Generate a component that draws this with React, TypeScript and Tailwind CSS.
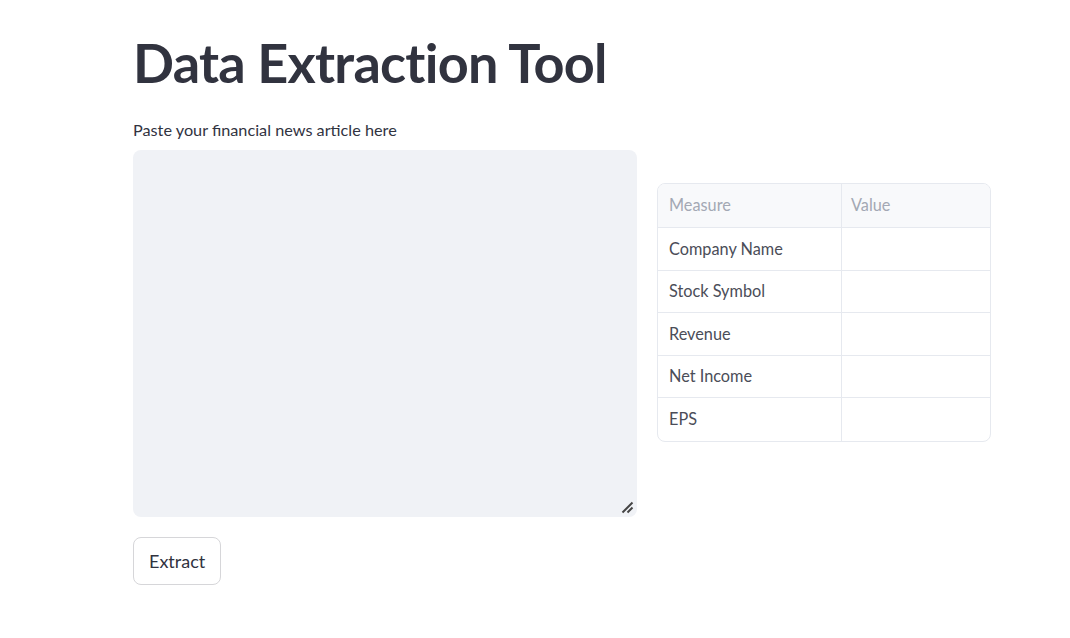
export default function App() {
  const rows = ["Company Name", "Stock Symbol", "Revenue", "Net Income", "EPS"];
  return (
    <div className="min-h-[638px] w-[1070px] bg-white text-[#31333f]" style={{ fontFamily: "Lato, 'Noto Sans', sans-serif" }}>
      <div className="pl-[133px] pr-[70px] pt-[33px]">
        <h1 className="text-[54px] font-bold leading-[60px] tracking-[-0.75px] text-[#31333f]">Data Extraction Tool</h1>
        <div className="mt-[27px] flex gap-[20px]">
          <div className="flex w-[504px] shrink-0 flex-col">
            <label className="text-[16.25px] leading-[20px]">Paste your financial news article here</label>
            <div className="relative mt-[10px] h-[367px] rounded-[8px] bg-[#f0f2f6]">
              <svg className="absolute bottom-[3px] right-[3px]" width="13" height="13" viewBox="0 0 13 13">
                <line x1="11.5" y1="1.5" x2="1.5" y2="11.5" stroke="#444" strokeWidth="2" />
                <line x1="11.5" y1="6.5" x2="6.5" y2="11.5" stroke="#444" strokeWidth="2" />
              </svg>
            </div>
            <div className="mt-[20px]">
              <button className="h-[48px] rounded-[8px] border border-[#d6d6d9] bg-white px-[15px] text-[18px] text-[#31333f]">Extract</button>
            </div>
          </div>
          <div className="shrink-0 pt-[63px]">
            <div className="w-[334px] overflow-hidden rounded-[8px] border border-[#e6e9ef]">
              <div className="flex h-[44px] border-b border-[#e6e9ef] bg-[#f8f9fb] text-[16.3px] text-[#a3a8b4]">
                <div className="flex w-[184px] items-center border-r border-[#e6e9ef] px-[11px]">Measure</div>
                <div className="flex flex-1 items-center px-[9px]">Value</div>
              </div>
              {rows.map((r, i) => (
                <div key={r} className={`flex h-[42.6px] text-[16.3px] text-[#4b4d58] ${i < rows.length - 1 ? "border-b border-[#e6e9ef]" : ""}`}>
                  <div className="flex w-[184px] items-center border-r border-[#e6e9ef] px-[11px]">{r}</div>
                  <div className="flex-1" />
                </div>
              ))}
            </div>
          </div>
        </div>
      </div>
    </div>
  );
}
